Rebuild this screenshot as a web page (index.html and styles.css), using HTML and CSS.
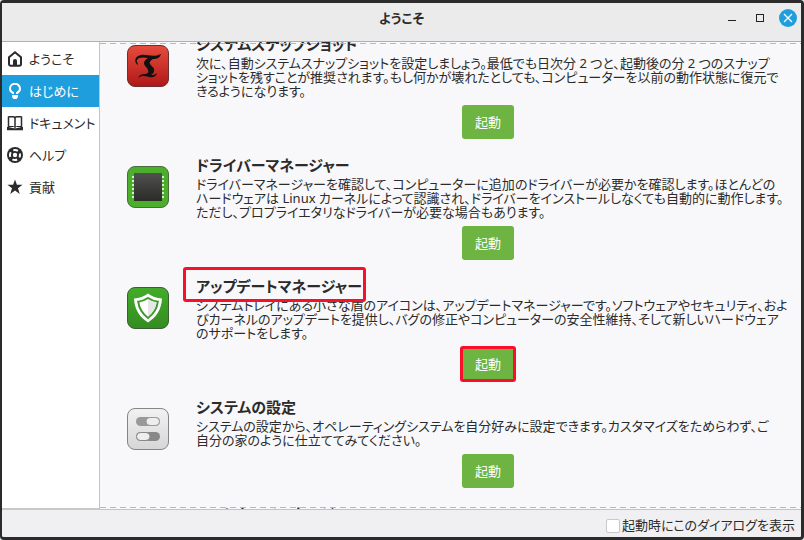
FILE: index.html
```
<!DOCTYPE html>
<html lang="ja">
  <head>
    <meta charset="utf-8">
    <title>ようこそ</title>
    <link rel="stylesheet" href="styles.css">
  </head>
  <body>
    <div class="window">
      <header class="titlebar">
        <h1>ようこそ</h1>
        <div class="window-buttons">
          <button type="button" aria-label="最小化">
            <svg width="18" height="18" viewBox="0 0 18 18"><path d="M5 11.5h8" stroke="#222" /></svg>
          </button>
          <button type="button" aria-label="最大化">
            <svg width="18" height="18" viewBox="0 0 18 18"><rect x="5.5" y="5.5" width="7" height="7" fill="none" stroke="#222" /></svg>
          </button>
          <button type="button" class="close" aria-label="閉じる">
            <svg width="18" height="18" viewBox="0 0 18 18"><path d="M5 5l8 8M13 5l-8 8" stroke="#fff" stroke-width="1.3" /></svg>
          </button>
        </div>
      </header>

      <div class="main">
        <nav class="sidebar">
          <a href="#welcome">
            <svg width="16" height="16" viewBox="0 0 16 16"><path d="M2 6.200L8 1.300l6 4.900V13a1.700 1.700 0 0 1-1.700 1.700H3.700A1.700 1.700 0 0 1 2 13z" fill="none" stroke="currentColor" stroke-width="2" /><path d="M6 15v-5a2 2 0 0 1 4 0v5z" fill="currentColor" /></svg>
            <span>ようこそ</span>
          </a>
          <a href="#first-steps" class="active">
            <svg width="16" height="16" viewBox="0 0 16 16"><path d="M6 11V10C4 9 3 7.600 3 5.800a5 5 0 0 1 10 0c0 1.800-1 3.200-3 4.200v1" fill="none" stroke="currentColor" stroke-width="2" /><path d="M5 12h6v2l-1.500 2h-3L5 14z" fill="currentColor" /></svg>
            <span>はじめに</span>
          </a>
          <a href="#docs">
            <svg width="16" height="16" viewBox="0 0 16 16"><path d="M1.500 1.500v12M14.500 1.500v12M8 3v9" stroke="currentColor" stroke-width="1.500" /><path d="M1.500 1.800h4.500q2 0 2 1.500q0-1.500 2-1.500h4.500" fill="none" stroke="currentColor" stroke-width="1.500" /><path d="M2 11.500h4.500L8 12.500l1.500-1h4.500" fill="none" stroke="currentColor" /><path d="M0 12h1l6 1.200h2L15 12h1v3.200H0z" fill="currentColor" /></svg>
            <span>ドキュメント</span>
          </a>
          <a href="#help">
            <svg width="16" height="16" viewBox="0 0 16 16"><circle cx="8" cy="8" r="8" fill="currentColor" /><circle cx="8" cy="8" r="5" fill="none" stroke="#fff" stroke-width="2" stroke-dasharray="4.850 3" stroke-dashoffset="2.400" /><circle cx="8" cy="8" r="2.200" fill="#fff" /></svg>
            <span>ヘルプ</span>
          </a>
          <a href="#contribute">
            <svg width="16" height="16" viewBox="0 0 16 16"><path d="M8 .5l1.900 5.300h5.600L11 9.300l1.700 5.700L8 11.600 3.300 15 5 9.300.5 5.800h5.600z" fill="currentColor" /></svg>
            <span>貢献</span>
          </a>
        </nav>

        <main class="content">
          <div class="steps">
            <section class="step">
              <svg class="app-icon" width="42" height="42" viewBox="0 0 42 42">
                <defs><linearGradient id="red" x2="0" y2="1"><stop stop-color="#e64c3c" /><stop offset="1" stop-color="#b01818" /></linearGradient></defs>
                <rect x=".5" y=".5" width="41" height="41" rx="7.500" fill="url(#red)" stroke="#6d3030" />
                <path d="M11 20C7 18 7 11 14 10c6-1 12 3 20-1-1 4-4 5-8 5-2 1-4 3-3 5 2 3 5 4 4 7 0 2-2 3-3 4 2 0 4 0 6-2-1 4-4 5-8 4-4-1-7-2-11 1 2-4 5-4 8-4 2-1 3-2 2-4-1-3-4-4-4-7 0-2 2-4 4-5-4-1-10-1-11 2-1 2 1 2 1 5z" fill="#111" />
              </svg>
              <div class="step-body">
                <h2>システムスナップショット</h2>
                <p>次に、自動システムスナップショットを設定しましょう。最低でも日次分 2 つと、起動後の分 2 つのスナップ<br>ショットを残すことが推奨されます。もし何かが壊れたとしても、コンピューターを以前の動作状態に復元で<br>きるようになります。</p>
                <button type="button" class="launch">起動</button>
              </div>
            </section>

            <section class="step">
              <svg class="app-icon" width="42" height="42" viewBox="0 0 42 42">
                <defs><linearGradient id="chip" x2="0" y2="1"><stop stop-color="#505050" /><stop offset="1" stop-color="#2b2b28" /></linearGradient></defs>
                <rect x=".5" y=".5" width="41" height="41" rx="7.500" fill="#4caf2b" stroke="#4a6a40" />
                <path d="M6 10v23M36 10v23" stroke="#d7efcc" stroke-width="2" stroke-dasharray="2 2" />
                <rect x="7" y="7" width="28" height="28" fill="url(#chip)" />
              </svg>
              <div class="step-body">
                <h2>ドライバーマネージャー</h2>
                <p>ドライバーマネージャーを確認して、コンピューターに追加のドライバーが必要かを確認します。ほとんどの<br>ハードウェアは Linux カーネルによって認識され、ドライバーをインストールしなくても自動的に動作します。<br>ただし、プロプライエタリなドライバーが必要な場合もあります。</p>
                <button type="button" class="launch">起動</button>
              </div>
            </section>

            <section class="step">
              <svg class="app-icon" width="42" height="42" viewBox="0 0 42 42">
                <defs><linearGradient id="green" x2="0" y2="1"><stop stop-color="#43ac2b" /><stop offset="1" stop-color="#348c20" /></linearGradient></defs>
                <rect x=".5" y=".5" width="41" height="41" rx="7.500" fill="url(#green)" stroke="#3c5f34" />
                <path d="M21 6.500c4 3 8.500 4.500 14 5-.5 11-5.500 18.500-14 24-8.500-5.500-13.500-13-14-24 5.500-.5 10-2 14-5z" fill="#fff" />
                <path d="M21 11c3 2 6 3.200 9.800 3.700C30 21.500 26.800 26.700 21 31c-5.800-4.300-9-9.500-9.800-16.300C15 14.200 18 13 21 11z" fill="#fff" stroke="#3b9b26" stroke-width="2" />
                <path d="M21 12.200c2.700 1.800 5.300 2.800 8.600 3.300C28.700 21 26 25.800 21 29.700z" fill="#e6e6e6" />
              </svg>
              <div class="step-body">
                <h2 class="marked marked-title">アップデートマネージャー</h2>
                <p>システムトレイにある小さな盾のアイコンは、アップデートマネージャーです。ソフトウェアやセキュリティ、およ<br>びカーネルのアップデートを提供し、バグの修正やコンピューターの安全性維持、そして新しいハードウェア<br>のサポートをします。</p>
                <button type="button" class="launch marked">起動</button>
              </div>
            </section>

            <section class="step">
              <svg class="app-icon" width="42" height="42" viewBox="0 0 42 42">
                <defs><linearGradient id="grey" x2="0" y2="1"><stop stop-color="#f2f2f2" /><stop offset="1" stop-color="#d6d6d6" /></linearGradient></defs>
                <rect x=".5" y=".5" width="41" height="41" rx="7.500" fill="url(#grey)" stroke="#858585" />
                <rect x="9" y="9" width="24" height="9" rx="4.500" fill="#999" />
                <rect x="19" y="9.500" width="13.500" height="8" rx="4" fill="#eee" stroke="#999" />
                <rect x="9" y="24" width="24" height="9" rx="4.500" fill="#888" />
                <rect x="9.500" y="24.500" width="13.500" height="8" rx="4" fill="#eee" stroke="#888" />
              </svg>
              <div class="step-body">
                <h2>システムの設定</h2>
                <p>システムの設定から、オペレーティングシステムを自分好みに設定できます。カスタマイズをためらわず、ご<br>自分の家のように仕立ててみてください。</p>
                <button type="button" class="launch">起動</button>
              </div>
            </section>

            <section class="step">
              <div class="app-icon"></div>
              <div class="step-body">
                <h2>ソフトウェアマネージャー</h2>
              </div>
            </section>
          </div>
        </main>
      </div>

      <footer class="statusbar">
        <input type="checkbox" id="show-startup">
        <label for="show-startup">起動時にこのダイアログを表示</label>
      </footer>
    </div>
  </body>
</html>
```

FILE: styles.css
```
* {
  box-sizing: border-box;
}
body {
  margin: 0;
  background: #e4efef;
  color: #2b2b2b;
  font-family: "Noto Sans", "Noto Sans CJK JP", sans-serif;
  font-size: 13px;
  font-feature-settings: "palt";
}
h1, h2, p {
  margin: 0;
}
button {
  border: 0;
  padding: 0;
  font: inherit;
  font-feature-settings: inherit;
}

.window {
  display: flex;
  flex-direction: column;
  height: 100vh;
  border: 3px solid #2b2b2b;
  border-left-width: 2px;
  border-radius: 4px;
  background: #f0f0f2;
}

/* title bar */
.titlebar {
  display: grid;
  grid-template-columns: 1fr auto 1fr;
  flex: none;
  height: 39px;
  padding: 6px 4px 0;
  background: #ebebec;
  border-bottom: 1px solid #b0b0b0;
}
.titlebar h1 {
  grid-column: 2;
  font-size: 13px;
  line-height: 18px;
}
.window-buttons {
  display: flex;
  justify-content: flex-end;
  gap: 10px;
}
.window-buttons button {
  width: 18px;
  height: 18px;
  border-radius: 50%;
  background: none;
}
.window-buttons svg {
  display: block;
}
.window-buttons .close {
  background: #1f9ede;
}

.main {
  display: flex;
  flex: 1;
  min-height: 0;
}

/* sidebar */
.sidebar {
  flex: none;
  width: 98px;
  padding-top: 1px;
  background: #fff;
  border-right: 1px solid #c4c4c4;
  border-bottom: 2px solid #c8c8c8;
}
.sidebar a {
  display: flex;
  align-items: center;
  gap: 6px;
  height: 32px;
  padding-left: 5px;
  color: #2b2b2b;
  text-decoration: none;
  white-space: nowrap;
}
.sidebar span {
  padding-bottom: 2px;
}
.sidebar a.active {
  background: #1f9ede;
  color: #fff;
}

/* scrolled list of steps */
.content {
  position: relative;
  flex: 1;
  overflow: hidden;
  background: #f8f8fa;
  border-bottom: 1px solid #c4c4c4;
}
.content::before,
.content::after {
  content: "";
  position: absolute;
  left: 0;
  right: 0;
  top: 1px;
  height: 1px;
  background: repeating-linear-gradient(90deg, #b8b8b8 0 6px, transparent 6px 10px);
}
.content::after {
  top: auto;
  bottom: 1px;
}
.steps {
  margin-top: -8px;
  padding: 0 21px 0 27px;
}
.step {
  display: flex;
  gap: 27px;
}
.app-icon {
  flex: none;
  width: 42px;
  margin-top: 11px;
}
.step-body {
  flex: 1;
  min-width: 0;
  padding-bottom: 16px;
}
.step h2 {
  width: fit-content;
  font-size: 15px;
  line-height: 20px;
}
.step p {
  margin: 2px 0 7px;
  line-height: 14px;
  white-space: nowrap;
}
.launch {
  display: block;
  width: 52px;
  height: 34px;
  margin: 0 auto;
  padding-bottom: 2px;
  border-radius: 3px;
  background: #6db442;
  color: #fff;
}

/* red frames round the things to click */
.marked {
  position: relative;
}
.marked::after {
  content: "";
  position: absolute;
  inset: -1px -2px;
  border: 3px solid #f80f2a;
  border-radius: 3px;
}
.marked-title::after {
  inset: -9px -4px -6px -13px;
}

/* footer */
.statusbar {
  display: flex;
  flex: none;
  align-items: center;
  justify-content: flex-end;
  gap: 2px;
  height: 27px;
  padding: 4px 6px 0 0;
}
.statusbar input {
  appearance: none;
  width: 14px;
  height: 14px;
  margin: 0;
  border: 1px solid #c8c8c8;
  border-radius: 2px;
  background: #fff;
}
.statusbar label {
  padding-bottom: 2px;
}
```
